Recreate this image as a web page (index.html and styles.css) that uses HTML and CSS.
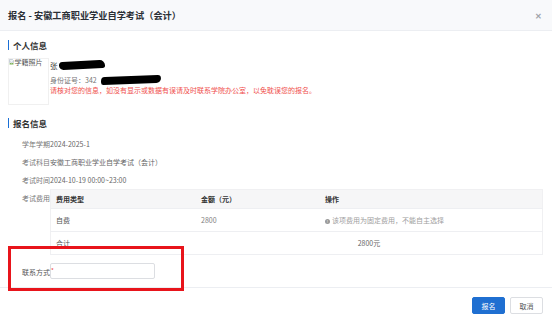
FILE: index.html
```html
<!DOCTYPE html>
<html lang="zh-CN">
<head>
    <meta charset="UTF-8">
    <meta name="viewport" content="width=device-width, initial-scale=1.0">
    <title>报名</title>
    <link rel="stylesheet" href="styles.css">
</head>
<body>
    <div class="modal">
        <div class="modal-header">
            <span class="modal-title">报名 - 安徽工商职业学业自学考试（会计）</span>
            <span class="modal-close">&#x2715;</span>
        </div>

        <div class="modal-body">
            <div class="section-title">个人信息</div>
            <div class="person">
                <div class="photo">
                    <svg class="broken" width="5" height="6" viewBox="0 0 5 6">
                        <path d="M0.5 0.5h3l1 1v2l-1-0.6-1 0.8-1-0.8-1 0.6z" fill="#eef3f8" stroke="#9aa7b4" stroke-width="0.5"/>
                        <path d="M0.5 4.5l1-0.8 1 0.8 1-0.8 1 0.6v1.2h-4z" fill="#7fb35a"/>
                    </svg>
                    <span>学籍照片</span>
                </div>
                <div class="person-info">
                    <div class="name">张<span class="redact redact-name"></span></div>
                    <div class="idcard">身份证号：342<span class="redact redact-id"></span></div>
                    <div class="notice">请核对您的信息，如没有显示或数据有误请及时联系学院办公室，以免耽误您的报名。</div>
                </div>
            </div>

            <div class="section-title section-gap">报名信息</div>
            <div class="form-row"><span class="label">学年学期</span>2024-2025-1</div>
            <div class="form-row"><span class="label">考试科目</span>安徽工商职业学业自学考试（会计）</div>
            <div class="form-row"><span class="label">考试时间</span>2024-10-19 00:00~23:00</div>
            <div class="fee-row">
                <span class="label fee-label">考试费用</span>
                <table class="fee-table">
                    <tr class="head">
                        <th class="col-type">费用类型</th>
                        <th class="col-amount">金额（元）</th>
                        <th>操作</th>
                    </tr>
                    <tr>
                        <td>自费</td>
                        <td class="num">2800</td>
                        <td class="tip"><span class="tip-icon">!</span>该项费用为固定费用，不能自主选择</td>
                    </tr>
                    <tr>
                        <td>合计</td>
                        <td colspan="2" class="total">2800元</td>
                    </tr>
                </table>
            </div>
            <div class="contact-row">
                <span class="label">联系方式<span class="required">*</span></span>
                <input type="text" class="contact-input">
            </div>
        </div>

        <div class="modal-footer">
            <button class="btn btn-primary">报名</button>
            <button class="btn">取消</button>
        </div>

        <div class="mark"></div>
    </div>
</body>
</html>
```

FILE: styles.css
```css
body {
    margin: 0;
    padding: 0;
    background-color: #fff;
    font-family: "Noto Sans CJK SC", "Noto Sans", sans-serif;
    color: #666;
}
.modal {
    position: relative;
    width: 552px;
    height: 324px;
}
.modal-header {
    height: 30px;
    padding: 0 10px 0 8px;
    display: flex;
    justify-content: space-between;
    align-items: center;
    background-color: #f8f9fb;
    border-bottom: 1px solid #eceef2;
}
.modal-title {
    font-size: 9.2px;
    font-weight: bold;
    color: #2b2f36;
}
.modal-close {
    font-size: 8px;
    color: #a0a4aa;
    font-weight: bold;
}
.modal-body {
    padding: 9px 9px 0 8px;
    height: 256px;
    box-sizing: border-box;
    font-size: 7px;
}
.section-title {
    height: 10px;
    line-height: 10px;
    padding-left: 4px;
    border-left: 1.5px solid #1a6fd6;
    font-size: 8.5px;
    font-weight: bold;
    color: #333;
}
.section-gap {
    margin-top: 13px;
}
.person {
    display: flex;
    margin-top: 8px;
}
.photo {
    width: 41px;
    height: 47px;
    box-sizing: border-box;
    border: 1px solid #f0f0f0;
    display: flex;
    align-items: flex-start;
    font-size: 7px;
    line-height: 7px;
    color: #555;
    white-space: nowrap;
    overflow: hidden;
}
.photo .broken {
    flex-shrink: 0;
    margin-right: 0.5px;
}
.person-info {
    padding-top: 3px;
    padding-left: 1px;
}
.name {
    height: 10px;
    line-height: 10px;
    font-size: 7.5px;
    color: #333;
    display: flex;
    align-items: center;
}
.idcard {
    margin-top: 3px;
    height: 12px;
    line-height: 12px;
    color: #777;
    display: flex;
    align-items: center;
}
.notice {
    height: 8px;
    line-height: 8px;
    color: #f0504d;
    white-space: nowrap;
}
.redact {
    display: inline-block;
    background-color: #000;
}
.redact-name {
    width: 46px;
    height: 8px;
    margin-left: 1px;
    margin-top: -2px;
    border-radius: 4px 6px 3px 5px;
    transform: rotate(-3deg);
}
.redact-id {
    width: 60px;
    height: 8px;
    margin-left: 4px;
    border-radius: 5px 4px 6px 3px;
    transform: rotate(-2deg);
}
.form-row {
    height: 18px;
    line-height: 18px;
    padding-left: 14px;
    color: #666;
}
.section-gap + .form-row {
    margin-top: 7px;
}
.label {
    color: #777;
}
.fee-row {
    display: flex;
    padding-left: 14px;
}
.fee-label {
    width: 28px;
    line-height: 19px;
    flex-shrink: 0;
}
.fee-table {
    width: 493px;
    border-collapse: collapse;
    border: 1px solid #f0f0f2;
    font-size: 7px;
}
.fee-table th,
.fee-table td {
    text-align: left;
    padding: 0 5px;
    border-bottom: 1px solid #eeeff2;
}
.fee-table th {
    height: 18px;
    background-color: #f6f6f7;
    color: #333;
    font-weight: bold;
}
.fee-table td {
    height: 22px;
    color: #555;
}
.col-type {
    width: 135px;
}
.col-amount {
    width: 114px;
}
.fee-table .num {
    color: #808080;
}
.fee-table .tip {
    color: #a0a0a0;
}
.tip-icon {
    display: inline-block;
    width: 5px;
    height: 5px;
    line-height: 5px;
    margin-right: 2px;
    border-radius: 50%;
    background-color: #999;
    color: #fff;
    font-size: 4px;
    text-align: center;
}
.fee-table .total {
    text-align: center;
    color: #666;
}
.contact-row {
    display: flex;
    align-items: center;
    margin-top: 8px;
    padding-left: 14px;
}
.contact-row .label {
    width: 28px;
    color: #555;
    white-space: nowrap;
}
.required {
    position: relative;
    z-index: 1;
    margin-left: 1px;
    color: #f04040;
    font-size: 6px;
    vertical-align: 2px;
}
.contact-input {
    width: 105px;
    height: 16px;
    box-sizing: border-box;
    border: 1px solid #dcdee2;
    border-radius: 2px;
    margin: 0;
    padding: 0 4px;
    background: transparent;
}
.modal-footer {
    border-top: 1px solid #eceef2;
    padding: 9px 9px 0 0;
    display: flex;
    justify-content: flex-end;
    gap: 5px;
}
.btn {
    width: 33px;
    height: 17px;
    padding: 0;
    border: 1px solid #dcdee2;
    border-radius: 2px;
    background-color: #fff;
    color: #555;
    font-family: "Noto Sans CJK SC", sans-serif;
    font-size: 7px;
}
.btn-primary {
    background-color: #1f6fd1;
    border-color: #1f6fd1;
    color: #fff;
}
.mark {
    position: absolute;
    left: 8px;
    top: 246px;
    width: 176px;
    height: 45px;
    box-sizing: border-box;
    border: 3px solid #e8141b;
}
```
